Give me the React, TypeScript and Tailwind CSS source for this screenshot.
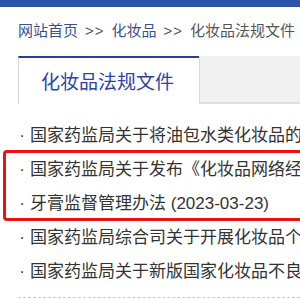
import React from 'react'

const font = { fontFamily: '"Liberation Sans", "Noto Sans CJK SC", sans-serif' }

const items = [
	'国家药监局关于将油包水类化妆品的相关要求的公告',
	'国家药监局关于发布《化妆品网络经营监督管理办法》的公告',
	'牙膏监督管理办法 (2023-03-23)',
	'国家药监局综合司关于开展化妆品个性化服务试点工作的通知',
	'国家药监局关于新版国家化妆品不良反应监测系统上线运行的公告',
]

export default function App() {
	return (
		<div className="relative w-[300px] h-[300px] overflow-hidden bg-white" style={font}>
			{/* top bar */}
			<div className="h-[7px] bg-[#2b53a6]" />

			{/* breadcrumb */}
			<div className="h-[49px] pl-[18px] flex items-center whitespace-nowrap text-[15px] text-[#555]">
				<span className="text-[#3a4f8e]">网站首页</span>
				<span className="mx-[7px] tracking-[1px]">&gt;&gt;</span>
				<span className="text-[#3a4f8e]">化妆品</span>
				<span className="mx-[7px] tracking-[1px]">&gt;&gt;</span>
				<span>化妆品法规文件</span>
			</div>

			{/* tabs */}
			<div className="flex h-[48px] pl-[18px]">
				<div className="w-[181px] border-t-2 border-t-[#23409a] border-l border-l-[#d6d6d6] flex items-center justify-center pt-[5px]">
					<span className="text-[19px] text-[#2d44a6] pr-[3px]">化妆品法规文件</span>
				</div>
				<div className="flex-1 bg-[#f0f0f0] border-l border-l-[#dcdcdc] border-b-2 border-b-[#dedede]" />
			</div>

			{/* list */}
			<ul className="pt-[15px] pl-[18px] text-[17px] text-[#333]">
				{items.map((t) => (
					<li key={t} className="h-[34px] flex items-center whitespace-nowrap overflow-hidden">
						<span className="w-[8px] shrink-0 text-center text-[#444] mr-[4px]">·</span>
						<span>{t}</span>
					</li>
				))}
			</ul>
			<div className="ml-[18px] mt-[8px] border-t border-dashed border-t-[#c8c8c8]" />

			{/* highlight annotation */}
			<div className="absolute left-[3px] top-[150px] w-[320px] h-[71px] border-[3px] border-[#f01010] rounded-[4px]" />
		</div>
	)
}
